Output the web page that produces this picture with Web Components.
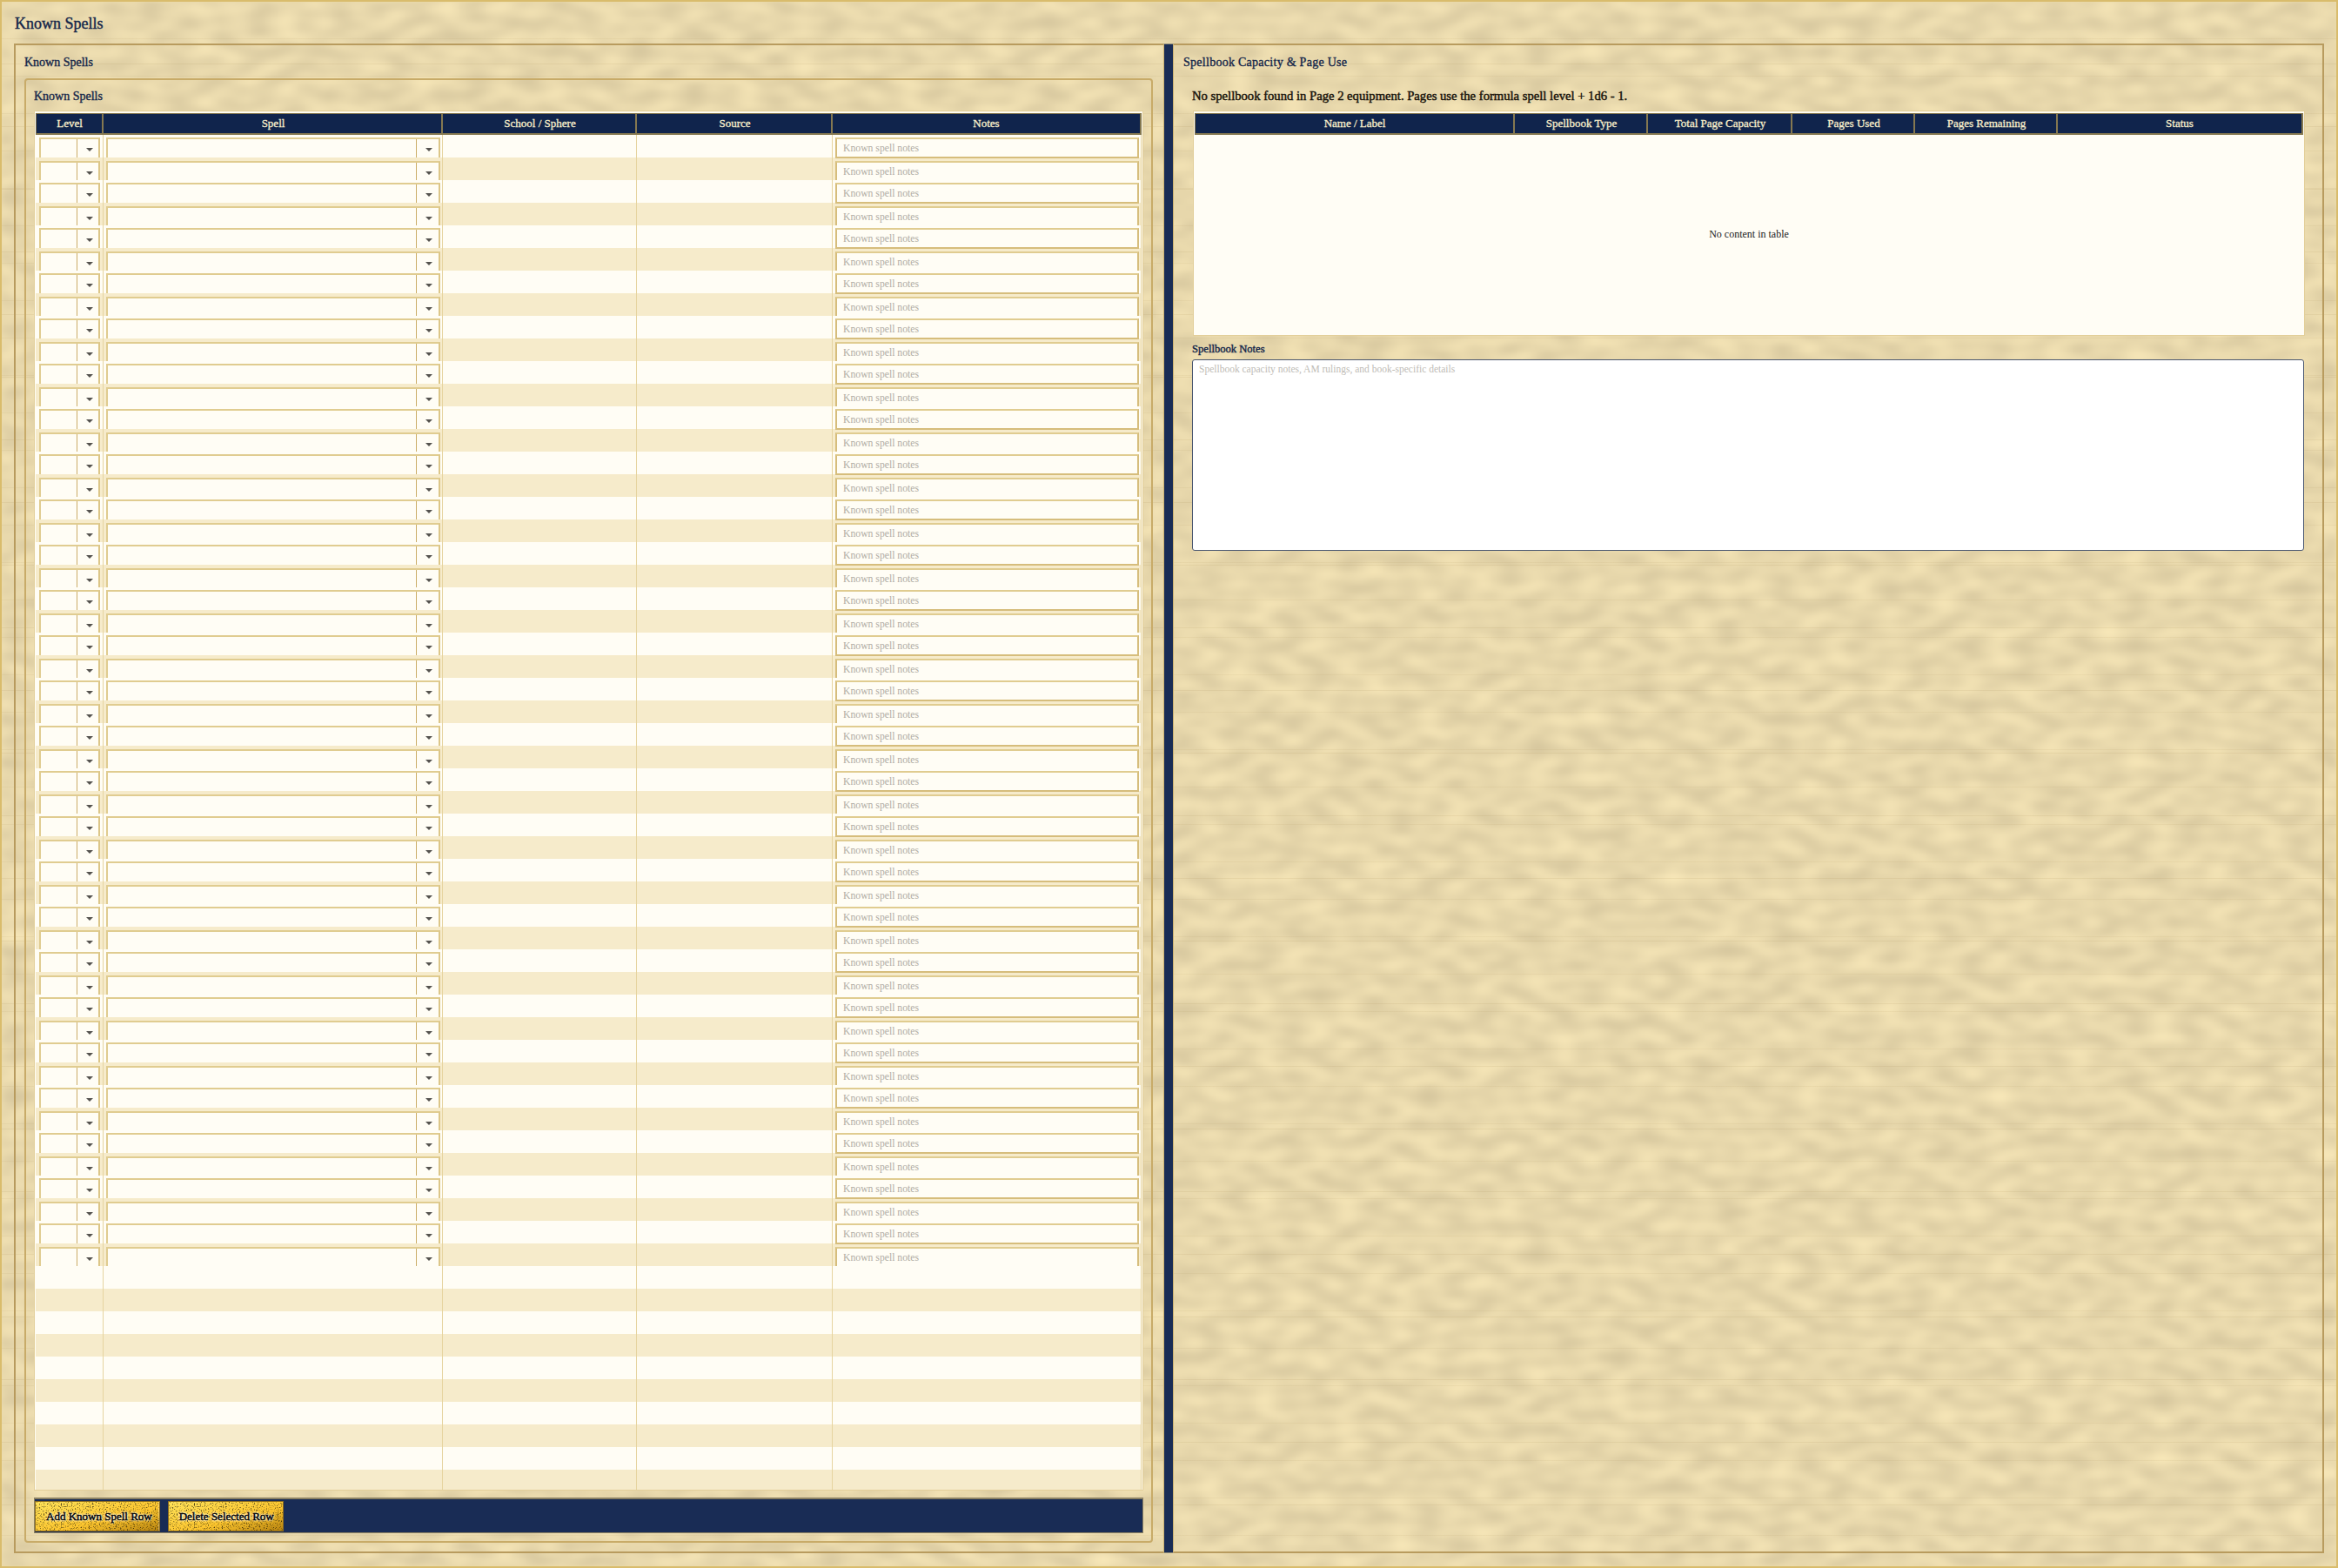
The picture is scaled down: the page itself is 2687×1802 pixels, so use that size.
<!DOCTYPE html>
<html lang="en">
<head>
<meta charset="utf-8">
<title>Known Spells</title>
<style>
  html, body { margin: 0; padding: 0; background: #ecdcac; }
  body { font-family: "Liberation Serif", "Times New Roman", serif; }
</style>
</head>
<body>
<ks-sheet heading="Known Spells">
  <ks-panel heading="Known Spells">
    <ks-group heading="Known Spells">
      <ks-table id="known" columns="78px 390px 223px 225px 1fr"
                labels="Level|Spell|School / Sphere|Source|Notes"></ks-table>
      <ks-toolbar>
        <ks-gold-button>Add Known Spell Row</ks-gold-button>
        <ks-gold-button>Delete Selected Row</ks-gold-button>
      </ks-toolbar>
    </ks-group>
  </ks-panel>
  <ks-panel slot="right" heading="Spellbook Capacity &amp; Page Use" wide>
    <ks-message>No spellbook found in Page 2 equipment. Pages use the formula spell level + 1d6 - 1.</ks-message>
    <ks-table fixed columns="368px 153px 166px 141px 164px 1fr"
              labels="Name / Label|Spellbook Type|Total Page Capacity|Pages Used|Pages Remaining|Status">
      <ks-empty>No content in table</ks-empty>
    </ks-table>
    <ks-notes label="Spellbook Notes"
              placeholder="Spellbook capacity notes, AM rulings, and book-specific details"></ks-notes>
  </ks-panel>
</ks-sheet>

<script>
  // Small helper: every element gets an open shadow root from a html string.
  function shadow(el, html) {
    el.attachShadow({ mode: 'open' }).innerHTML = html;
  }
  const esc = s => String(s).replace(/&/g, '&amp;').replace(/</g, '&lt;');

  class KsSheet extends HTMLElement {
    connectedCallback() {
      shadow(this, `
        <style>
          :host{ display:block; position:relative; box-sizing:border-box; width:2687px; height:1802px;
                 border:2px solid #d9bc6c; overflow:hidden; color:#14264a; isolation:isolate; }
          svg.bg{ position:absolute; left:0; top:0; display:block; }
          .lines{ position:absolute; left:0; top:0; right:0; bottom:0;
                  background:
                    repeating-linear-gradient(180deg, transparent 0 71px, rgba(150,120,60,.10) 71px 72px),
                    repeating-linear-gradient(180deg, transparent 0 42px, rgba(150,120,60,.07) 42px 43px); }
          .page{ position:relative; }
          h1{ margin:0; height:48px; box-sizing:border-box; padding:15px 0 0 15px; font:400 18px/20px "Liberation Serif",serif;
              -webkit-text-stroke:.4px #14264a; }
          main{ display:flex; height:1735px; padding:0 14px; }
          .split{ flex:0 0 12px; box-sizing:border-box; background:#192c55;
                  border-left:1px solid #cdb373; border-right:1px solid #cdb373;
                  border-bottom:1px solid #8f8a78; border-top:1px solid #8f8a78; }
          ::slotted(ks-panel){ flex:0 0 1321px; }
          ::slotted(ks-panel[wide]){ flex:1 1 0; }
        </style>
        <svg class="bg" xmlns="http://www.w3.org/2000/svg" width="2683" height="1798">
          <filter id="parch" filterUnits="userSpaceOnUse" x="0" y="0" width="2683" height="1798" color-interpolation-filters="sRGB">
            <feTurbulence type="fractalNoise" baseFrequency="0.032 0.06" numOctaves="1" seed="7"/>
            <feColorMatrix type="matrix" values=".18 0 0 0 .815  .175 0 0 0 .755  .14 0 0 0 .60  0 0 0 0 1"/>
            <feGaussianBlur stdDeviation="2.5 1.5"/>
          </filter>
          <rect x="0" y="0" width="2683" height="1798" fill="#ecdcac" filter="url(#parch)"/>
        </svg>
        <div class="lines"></div>
        <div class="page">
          <h1>${esc(this.getAttribute('heading'))}</h1>
          <main>
            <slot></slot>
            <div class="split"></div>
            <slot name="right"></slot>
          </main>
        </div>`);
    }
  }

  class KsPanel extends HTMLElement {
    connectedCallback() {
      shadow(this, `
        <style>
          :host{ display:flex; flex-direction:column; box-sizing:border-box; min-width:0;
                 border:2px solid #b89b5e; border-right:0; padding:0 12px 10px 10px; }
          :host([wide]){ border-left:0; border-right:2px solid #b89b5e; padding:0 20px 10px 11px; }
          h2{ margin:0; flex:0 0 38px; box-sizing:border-box; padding-top:11px; font:400 14px/17px "Liberation Serif",serif;
              -webkit-text-stroke:.35px #14264a; color:#14264a; }
          :host([wide]) h2{ letter-spacing:.27px; }
        </style>
        <h2>${esc(this.getAttribute('heading'))}</h2>
        <slot></slot>`);
    }
  }

  class KsGroup extends HTMLElement {
    connectedCallback() {
      shadow(this, `
        <style>
          :host{ display:flex; flex-direction:column; flex:1 1 auto; min-height:0; box-sizing:border-box;
                 border:2px solid #c8ab68; border-radius:4px; padding:0 9px 9px; }
          h3{ margin:0; flex:0 0 35px; box-sizing:border-box; padding-top:10px; font:400 14px/17px "Liberation Serif",serif;
              -webkit-text-stroke:.35px #14264a; color:#14264a; }
        </style>
        <h3>${esc(this.getAttribute('heading'))}</h3>
        <slot></slot>`);
    }
  }

  class KsTable extends HTMLElement {
    connectedCallback() {
      const labels = this.getAttribute('labels').split('|');
      shadow(this, `
        <style>
          :host{ display:block; flex:1 1 auto; min-height:0; box-sizing:border-box; overflow:hidden;
                 border:1px solid #e3cf9a; --cols:${this.getAttribute('columns')}; }
          :host([fixed]){ flex:0 0 259px; margin-left:11px; }
          .wrap{ display:flex; flex-direction:column; height:100%; box-sizing:border-box; background:#fffdf5;
                 border:1px solid #fffdf5; border-bottom:0; border-top-color:#fbf6e6; padding-top:1px; }
          .head{ flex:0 0 25px; box-sizing:border-box; display:grid; grid-template-columns:var(--cols); background:#10244c;
                 box-shadow:inset 0 1px 0 #857850, inset 0 -2px 0 #857850, inset 1px 0 0 #857850, inset -2px 0 0 #857850; }
          .th{ display:flex; align-items:center; justify-content:center; padding:0 0 1px 2px; box-sizing:border-box;
               border-right:2px solid #857850; color:#f8eecb; font:400 13px/16px "Liberation Serif",serif;
               -webkit-text-stroke:.3px #f8eecb; }
          .th:last-child{ border-right:0; padding:0 2px 1px 0; }
          .body{ flex:1 1 auto; min-height:0; overflow:hidden; display:flex; flex-direction:column; }
        </style>
        <div class="wrap">
          <div class="head">${labels.map(l => `<div class="th">${esc(l)}</div>`).join('')}</div>
          <div class="body"><slot></slot></div>
        </div>`);
    }
  }

  class KsRow extends HTMLElement {
    connectedCallback() {
      const filled = this.hasAttribute('filled');
      const note = filled ? '<ks-note>Known spell notes</ks-note>' : '';
      shadow(this, `
        <style>
          :host{ flex:0 0 26px; display:grid; grid-template-columns:78px 390px 223px 225px 1fr; height:26px; background:#fffdf5; }
          :host(:nth-child(even)){ background:#f6ebcb; }
          .c{ box-sizing:border-box; height:26px; overflow:hidden; border-right:1px solid #e6d49f; padding-top:3px; }
          :host(:nth-child(even)) .c{ padding-top:4px; }
          .lvl{ padding-left:4px; padding-right:3px; }
          .spl{ padding-left:3px; padding-right:2px; }
          .nts{ padding-left:3px; padding-right:2px; }
          :host(:nth-child(odd)) .nts{ overflow:visible; position:relative; z-index:1; }
          .plain{ padding:0; }
        </style>
        <div class="c lvl">${filled ? '<ks-select style="--btn:25px"></ks-select>' : ''}</div>
        <div class="c spl">${filled ? '<ks-select></ks-select>' : ''}</div>
        <div class="c plain"></div>
        <div class="c plain"></div>
        <div class="c nts">${note}</div>`);
    }
  }

  // Drawn as a box taller than the row, the row cuts its bottom border off.
  class KsSelect extends HTMLElement {
    connectedCallback() {
      shadow(this, `
        <style>
          :host{ display:flex; box-sizing:border-box; height:30px; background:#fffdf5;
                 border:2px solid #e0cc90; border-right-color:#dcc688; }
          .text{ flex:1 1 auto; }
          .btn{ flex:0 0 var(--btn, 26px); box-sizing:border-box; border-left:1px solid #cbad68; height:21px; display:flex; justify-content:center; padding:10px 0 0 3px; }
          .btn i{ display:block; width:0; height:0; border-left:4px solid transparent; border-right:4px solid transparent; border-top:4px solid #55534f; }
        </style>
        <div class="text"></div>
        <div class="btn"><i></i></div>`);
    }
  }

  class KsNote extends HTMLElement {
    connectedCallback() {
      shadow(this, `
        <style>
          :host{ display:block; box-sizing:border-box; height:24px; background:#fffdf5; overflow:hidden; white-space:nowrap;
                 border:2px solid #d6bd7c; border-top-color:#e0cc90; padding-left:7px;
                 font:400 11.7px/21px "Liberation Serif",serif; color:#b0aca4; }
        </style>
        <slot></slot>`);
    }
  }

  class KsToolbar extends HTMLElement {
    connectedCallback() {
      shadow(this, `
        <style>
          :host{ flex:0 0 41px; box-sizing:border-box; display:flex; gap:9px; align-items:flex-end; margin-top:8px;
                 background:#192c55; border:1px solid #8b8163; border-top-width:2px; border-left-width:1px; padding:0 0 1px 0; }
        </style>
        <slot></slot>`);
    }
  }

  class KsGoldButton extends HTMLElement {
    connectedCallback() {
      const id = 'g' + Math.random().toString(36).slice(2, 7);
      shadow(this, `
        <style>
          :host{ display:flex; position:relative; align-items:center; box-sizing:border-box; height:35px; padding:0 10px 0 12px; overflow:hidden;
                 border:1px solid #8a6a1e; color:#000; font:400 13px/16px "Liberation Serif",serif; white-space:nowrap;
                 -webkit-text-stroke:.45px #000; text-shadow:0 0 2px #fff, 0 0 3px #fff, 0 0 3px #fff; }
          :host(:first-child){ padding-right:8px; }
          svg{ position:absolute; left:0; top:0; width:100%; height:100%; }
          span{ position:relative; }
        </style>
        <svg xmlns="http://www.w3.org/2000/svg" preserveAspectRatio="none">
          <defs>
            <linearGradient id="${id}l" x1="0" y1="0" x2="1" y2="1">
              <stop offset="0" stop-color="#ffe35a"/><stop offset=".6" stop-color="#fcc52e"/><stop offset="1" stop-color="#b5820f"/>
            </linearGradient>
            <filter id="${id}f" x="0" y="0" width="100%" height="100%" color-interpolation-filters="sRGB">
              <feTurbulence type="fractalNoise" baseFrequency=".75" numOctaves="2" seed="3" result="n"/>
              <feColorMatrix in="n" type="matrix" values="2.6 0 0 0 -.2  2.6 0 0 0 -.2  2.6 0 0 0 -.2  0 0 0 0 1" result="g"/>
              <feBlend in="SourceGraphic" in2="g" mode="multiply"/>
            </filter>
          </defs>
          <rect width="100%" height="100%" fill="url(#${id}l)" filter="url(#${id}f)"/>
        </svg>
        <span><slot></slot></span>`);
    }
  }

  class KsMessage extends HTMLElement {
    connectedCallback() {
      shadow(this, `
        <style>
          :host{ display:block; flex:0 0 37px; box-sizing:border-box; padding:11px 0 0 10px;
                 font:400 14.65px/18px "Liberation Serif",serif; color:#17120a; -webkit-text-stroke:.45px #17120a; white-space:nowrap; }
        </style>
        <slot></slot>`);
    }
  }

  class KsEmpty extends HTMLElement {
    connectedCallback() {
      shadow(this, `
        <style>
          :host{ display:flex; flex:1 1 auto; align-items:center; justify-content:center; padding-bottom:2px;
                 font:400 12px/14px "Liberation Serif",serif; color:#222; }
        </style>
        <slot></slot>`);
    }
  }

  class KsNotes extends HTMLElement {
    connectedCallback() {
      shadow(this, `
        <style>
          :host{ display:flex; flex-direction:column; padding-left:10px; padding-right:1px; }
          label{ height:27px; box-sizing:border-box; padding-top:8px; font:400 12.6px/15px "Liberation Serif",serif; color:#14264a;
                 -webkit-text-stroke:.4px #14264a; }
          .area{ height:220px; box-sizing:border-box; background:#fff; border:1.5px solid #4a5770; border-radius:3px;
                 padding:2px 7px; font:400 11.5px/16px "Liberation Serif",serif; color:#c0bcb6; }
        </style>
        <label>${esc(this.getAttribute('label'))}</label>
        <div class="area">${esc(this.getAttribute('placeholder'))}</div>`);
    }
  }

  customElements.define('ks-sheet', KsSheet);
  customElements.define('ks-panel', KsPanel);
  customElements.define('ks-group', KsGroup);
  customElements.define('ks-table', KsTable);
  customElements.define('ks-row', KsRow);
  customElements.define('ks-select', KsSelect);
  customElements.define('ks-note', KsNote);
  customElements.define('ks-toolbar', KsToolbar);
  customElements.define('ks-gold-button', KsGoldButton);
  customElements.define('ks-message', KsMessage);
  customElements.define('ks-empty', KsEmpty);
  customElements.define('ks-notes', KsNotes);

  // 50 filled rows, then blank striped rows up to the bottom of the viewport
  const known = document.getElementById('known');
  for (let i = 0; i < 60; i++) {
    const row = document.createElement('ks-row');
    if (i < 50) row.setAttribute('filled', '');
    known.appendChild(row);
  }
</script>
</body>
</html>
